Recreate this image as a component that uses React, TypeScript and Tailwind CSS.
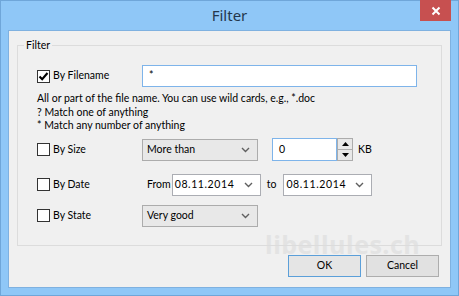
import React from 'react';

const font = { fontFamily: 'Lato, "Noto Sans", sans-serif' };

function Checkbox({ checked }: { checked?: boolean }) {
  return (
    <span className="flex h-[13px] w-[13px] shrink-0 items-center justify-center border border-[#333333] bg-white">
      {checked && (
        <svg width="11" height="11" viewBox="0 0 11 11">
          <path d="M1.5 5.5 L4.2 8.3 L9.5 2" fill="none" stroke="#000" strokeWidth="2.1" />
        </svg>
      )}
    </span>
  );
}

function Chevron() {
  return (
    <svg width="9" height="6" viewBox="0 0 9 6" className="shrink-0">
      <path d="M1 1 L4.5 4.5 L8 1" fill="none" stroke="#606060" strokeWidth="1.4" />
    </svg>
  );
}

function Select({ value, width }: { value: string; width: string }) {
  return (
    <div className={`flex h-[22px] ${width} items-center justify-between border border-[#acacac] bg-[#e8e8e8] pl-[4px] pr-[7px]`}>
      <span>{value}</span>
      <Chevron />
    </div>
  );
}

function DateBox({ value }: { value: string }) {
  return (
    <div className="flex h-[22px] w-[89px] items-center justify-between border border-[#abadb3] bg-white pl-[2px] pr-[7px]">
      <span className="tracking-[0.6px]">{value}</span>
      <Chevron />
    </div>
  );
}

function RowLabel({ label, checked }: { label: string; checked?: boolean }) {
  return (
    <div className="flex w-[105px] items-center gap-[3px]">
      <Checkbox checked={checked} />
      <span>{label}</span>
    </div>
  );
}

export default function App() {
  return (
    <div className="relative flex h-[296px] w-[459px] flex-col border border-[#6fa6d9] bg-[#8fc7f7] text-[10.5px] text-black" style={font}>
      {/* Title bar */}
      <div className="relative flex h-[29px] items-center justify-center">
        <span className="text-[15px] text-[#23374d]" style={{ fontFamily: '"Noto Sans", sans-serif' }}>Filter</span>
        <div className="absolute right-[7px] top-[-1px] flex h-[21px] w-[31px] items-center justify-center bg-[#c75050]">
          <svg width="10" height="10" viewBox="0 0 10 10">
            <path d="M1.5 1.5 L8.5 8.5 M8.5 1.5 L1.5 8.5" stroke="#fff" strokeWidth="2" />
          </svg>
        </div>
      </div>

      {/* Client area */}
      <div className="relative mx-[7px] mb-[7px] flex flex-1 flex-col border border-[#7fb1e0] bg-[#f0f0f0]">
        {/* Watermark */}
        <span className="pointer-events-none absolute left-[256px] top-[203px] text-[25px] font-bold leading-[20px] tracking-[0.5px] text-[#e3e3e3]" style={{ fontFamily: '"Open Sans", sans-serif' }}>
          libellules.ch
        </span>

        {/* Group box */}
        <div className="relative mx-[8px] mt-[14px] h-[201px] border border-[#dcdcdc] pl-[19px]">
          <span className="absolute left-[6px] top-[-9px] bg-[#f0f0f0] px-[2px] leading-[16px]">Filter</span>

          <div className="mt-[19px] flex h-[22px] items-center">
            <RowLabel label="By Filename" checked />
            <div className="flex h-[22px] w-[275px] items-center border border-[#7eb4ea] bg-white pl-[6px]">*</div>
          </div>

          <div className="mt-[5px] leading-[13.5px]">
            <div>All or part of the file name. You can use wild cards, e.g., *.doc</div>
            <div>? Match one of anything</div>
            <div>* Match any number of anything</div>
          </div>

          <div className="mt-[6px] flex h-[22px] items-center">
            <RowLabel label="By Size" />
            <Select value="More than" width="w-[116px]" />
            <div className="ml-[14px] flex h-[23px] w-[65px] items-center border border-[#7eb4ea] bg-white pl-[6px]">0</div>
            <div className="flex h-[23px] w-[16px] flex-col">
              <div className="flex flex-1 items-center justify-center border border-[#acacac] bg-[#e8e8e8]">
                <svg width="7" height="4" viewBox="0 0 7 4"><path d="M0 4 L3.5 0 L7 4 Z" fill="#000" /></svg>
              </div>
              <div className="flex flex-1 items-center justify-center border border-t-0 border-[#acacac] bg-[#e8e8e8]">
                <svg width="7" height="4" viewBox="0 0 7 4"><path d="M0 0 L3.5 4 L7 0 Z" fill="#000" /></svg>
              </div>
            </div>
            <span className="ml-[5px]">KB</span>
          </div>

          <div className="mt-[13px] flex h-[22px] items-center">
            <RowLabel label="By Date" />
            <span className="ml-[5px] mr-[1px]">From</span>
            <DateBox value="08.11.2014" />
            <span className="ml-[6px] mr-[7px]">to</span>
            <DateBox value="08.11.2014" />
          </div>

          <div className="mt-[9px] flex h-[22px] items-center">
            <RowLabel label="By State" />
            <Select value="Very good" width="w-[116px]" />
          </div>
        </div>

        {/* Buttons */}
        <div className="relative mt-[9px] flex justify-end gap-[5px] pr-[11px]">
          <div className="flex h-[22px] w-[73px] items-center justify-center border border-[#5b9fd9] bg-[#e5e5e5]">OK</div>
          <div className="flex h-[22px] w-[73px] items-center justify-center border border-[#adadad] bg-[#e1e1e1]">Cancel</div>
        </div>
      </div>
    </div>
  );
}
